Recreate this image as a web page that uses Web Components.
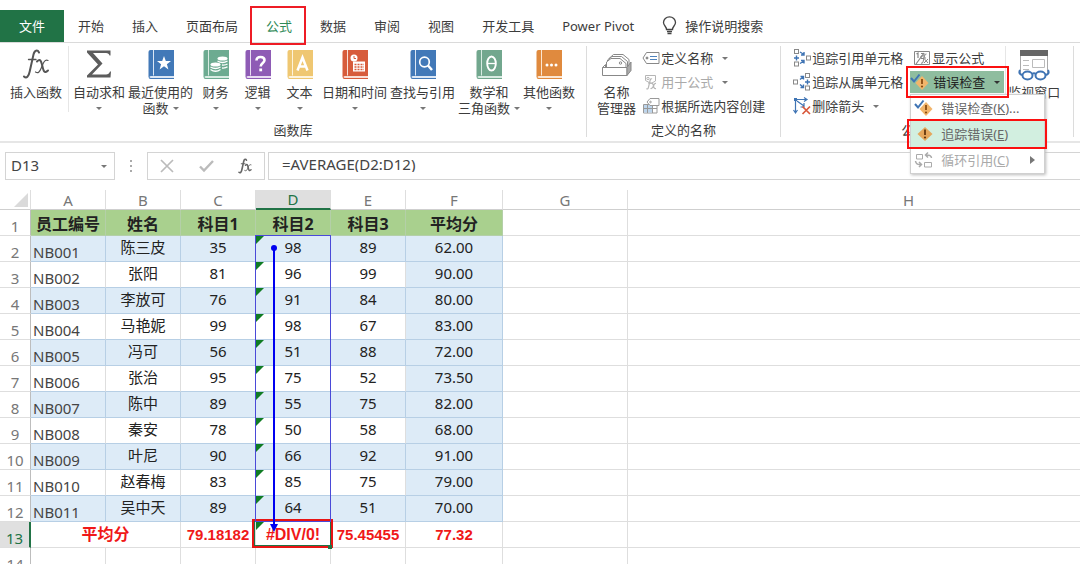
<!DOCTYPE html>
<html lang="zh-CN">
<head>
<meta charset="utf-8">
<title>工作簿 - 公式</title>
<style>
  html, body { margin: 0; height: 100%; overflow: hidden; background: #fff; }
  body { font: 13px/16px "Noto Sans", "Noto Sans CJK SC", sans-serif; color: #3c3c3c; }
</style>
</head>
<body>
<work-book></work-book>
<script>
const book = (color, edge, art) => `<svg width="26" height="30" viewBox="0 0 26 30">
  <path d="M2.500 1H26V30H2.500Q.5 30 .5 27.500V3Q.5 1 2.500 1Z" fill="${color}"/>
  <path d="M3 27H26V29H3Q1.500 29 1.500 28T3 27Z" fill="${edge}"/>
  <path d="M5.500 1V26.500" stroke="${edge}" stroke-width="1"/>${art}</svg>`;
const box = (x, y) => `<rect x="${x}" y="${y}" width="4" height="4" fill="#fff" stroke="#888"/>`;

const ICONS = {
  fx: `<svg width="28" height="30" viewBox="0 0 28 30" fill="none" stroke="#555" stroke-linecap="round">
    <path d="M17 3.500C15.500.5 12.500 1 11.500 5.500L7.700 22.500C6.700 27.500 4.500 30 2 27.500" stroke-width="2"/>
    <path d="M6.500 10.500H14" stroke-width="1.300"/>
    <path d="M15 12.500C18 9.500 19 11.500 20 15.500C21.500 22 22 25 26 21.500" stroke-width="2"/>
    <path d="M26 11.500C22.500 10 21 14.500 19.500 18.500C17.500 23.500 16 24.500 13.500 23" stroke-width="1.200"/></svg>`,
  sigma: `<svg width="26" height="30" viewBox="0 0 26 30"><path d="M1 1.500H24.500V6.500H23.500Q23 4 20 4H7L16.500 14.500L6 25.500H20Q23 25.500 24 22.500H25L24.500 28.500H1V26.500L12 15.500L1 3.500Z" fill="#5c5c5c"/></svg>`,
  recent: book('#4279b8', '#dbe7f5', `<path d="M16 7L17.800 12H23L18.900 15.200L20.400 20.400L16 17.300L11.600 20.400L13.100 15.200L9 12H14.200Z" fill="#fff"/>`),
  finance: book('#6dab91', '#d8ebe2', `<g fill="#fff"><ellipse cx="19.500" cy="9.500" rx="5" ry="2"/><ellipse cx="12.500" cy="15.500" rx="5" ry="2"/></g><g fill="none" stroke="#fff" stroke-width="1.300"><path d="M14.500 12Q19.500 15 24.500 12M19 16Q22.500 16.300 24.500 15M19 19Q22.500 19.300 24.500 17.800M7.500 18Q12.500 21 17.500 18M7.500 20.500Q12.500 24 17.500 20.500"/></g>`),
  logic: book('#8e5bb5', '#e8dcf2', `<path d="M11.500 11.500Q11.500 8 15.500 8T19.500 11.300C19.500 14 15.700 14 15.700 17.500" fill="none" stroke="#fff" stroke-width="2.600"/><rect x="14.300" y="19.500" width="2.800" height="2.800" fill="#fff"/>`),
  text: book('#efc772', '#fdf3dc', `<path d="M10.500 21.500L15.500 8.500L20.500 21.500M12.300 17.500H18.700" fill="none" stroke="#fff" stroke-width="2.500"/>`),
  date: book('#d75c3c', '#f9ded6', `<circle cx="12" cy="9" r="3.500" fill="#fff"/><path d="M12 7V9.500H14" fill="none" stroke="#d75c3c"/><path d="M11 12.500H23V22.500H11Z" fill="#fff"/><path d="M12.500 15.500H22M12.500 18H22M12.500 20.500H22" stroke="#d75c3c" stroke-width="1.600" stroke-dasharray="2 1"/>`),
  lookup: book('#4279b8', '#dbe7f5', `<circle cx="14.500" cy="13" r="4.800" fill="none" stroke="#fff" stroke-width="1.700"/><path d="M18 16.500L22 21" stroke="#fff" stroke-width="2.500"/>`),
  math: book('#72a78e', '#d8ebe2', `<ellipse cx="15.500" cy="14.500" rx="4.300" ry="7" fill="none" stroke="#fff" stroke-width="1.900"/><path d="M11.500 14.500H19.500" stroke="#fff" stroke-width="1.300"/>`),
  more: book('#e08a3e', '#fbe6d2', `<g fill="#fff"><circle cx="11" cy="16" r="1.500"/><circle cx="15.500" cy="16" r="1.500"/><circle cx="20" cy="16" r="1.500"/></g>`),
  names: `<svg width="32" height="30" viewBox="0 0 32 30" fill="#fff" stroke="#888" stroke-linejoin="round"><path d="M8 16V9.500L12.500 5.500H22L28 10.500V16"/><path d="M6.500 17V11L11 7.500H20.500L26.500 12.500V18"/><path d="M5.500 18V13L10 9.500H19L25 14.500V19"/><circle cx="19.500" cy="14" r="1.200"/><path d="M1.500 18.500L4.500 15.500V18.500M1.500 18.500H26V26.500H1.500Z"/><path d="M26 26.500L30 21.500V13L26 18.500Z" fill="#aaa"/></svg>`,
  define: `<svg width="18" height="16" viewBox="0 0 18 16" fill="#fff" stroke="#888"><path d="M4.500 2.500H17V13.500H4.500L1 8Z"/><circle cx="5" cy="8" r="1" fill="#777"/><path d="M8 6.500H15M8 9.500H15" stroke="#4f83bd"/></svg>`,
  use: `<svg width="18" height="16" viewBox="0 0 18 16" fill="none" stroke="#b5b5b5"><path d="M3.500 1.500H13.500V7L9 9.500L3.500 6.500Z"/><circle cx="6" cy="4.500" r="1.200"/><path d="M10 5Q8.500 4 8 7L6.500 13Q6 16 4.500 14.500M6 9H9.500M9.500 9.500Q11 9 11.500 12T14 14.500M14 9.500Q12.500 9 11.500 12T8.500 14.500" stroke-width="1.200"/></svg>`,
  create: `<svg width="18" height="16" viewBox="0 0 18 16" fill="#fff" stroke="#999"><path d="M1.500 6.500H15V15H1.500Z"/><path d="M2 7H11V14.500H2Z" fill="#bdd5ec" stroke="none"/><path d="M1.500 10.500H15M5.500 6.500V15M10.500 6.500V15"/><path d="M8 .5H17V7.500H8L5 4Z"/><circle cx="8.500" cy="4" r=".8"/></svg>`,
  precedents: `<svg width="18" height="18" viewBox="0 0 18 18">${box(1.500, .5)}${box(1.500, 13)}${box(13.500, 7)}<path d="M1 9H6M3.500 6.500V11.500M7 3L11 5.500M11 3V6H8M7 14.500L11 12M8 11.500H11V14.500" fill="none" stroke="#3f74b4" stroke-width="1.400"/></svg>`,
  dependents: `<svg width="18" height="18" viewBox="0 0 18 18">${box(.5, 7)}${box(12.500, .5)}${box(12.500, 13)}<path d="M12 9H17M14.500 6.500V11.500M7 6.500L10 4M7.500 3.500H10.500V6.500M7 11.500L10 14M10.500 11.500V14.500H7.500" fill="none" stroke="#3f74b4" stroke-width="1.400"/></svg>`,
  remove: `<svg width="18" height="18" viewBox="0 0 18 18" fill="none"><path d="M2.500 2.500V15.500M.5 13L2.500 16L4.500 13M2 2.500H13M11 .5L14 2.500L11 4.500M4 4L11 9M11 6V10H7.500" stroke="#3f74b4" stroke-width="1.200"/><rect x="1" y="1" width="3" height="3" fill="#3f74b4"/><path d="M9.500 9.500L17 17M17 9.500L9.500 17" stroke="#d9583b" stroke-width="1.700"/></svg>`,
  show: `<svg width="18" height="16" viewBox="0 0 18 16" fill="none" stroke="#888"><path d="M1.500 1.500H16.500V14.500H1.500Z"/><path d="M3.500 4L5 3V8M11 3L3 14" stroke-width="1.200"/><path d="M8 3.500H11V6H8V8.500H11M13.500 4Q12 3.500 11.500 6L10 12Q9.500 14 8 13M10 8H13M11.500 9L15 13M15 9L11 13"/></svg>`,
  check: `<svg width="20" height="18" viewBox="0 0 20 18"><path d="M12 3L18.500 10L12 17L5.500 10Z" fill="#f2b56b"/><path d="M12 6V11" stroke="#8a4b12" stroke-width="1.800"/><circle cx="12" cy="13.500" r="1.100" fill="#8a4b12"/><path d="M1 5L4 8.500L9.500 1.500" fill="none" stroke="#3f74b4" stroke-width="2"/></svg>`,
  trace: `<svg width="20" height="18" viewBox="0 0 20 18"><path d="M11 2L18.500 9L11 16L3.500 9Z" fill="#e5a75c"/><path d="M11 4.500V10" stroke="#63370f" stroke-width="1.800"/><circle cx="11" cy="12.500" r="1.100" fill="#63370f"/></svg>`,
  loop: `<svg width="20" height="18" viewBox="0 0 20 18" fill="none" stroke="#aaa"><path d="M2.500 3.500H8.500V8H2.500ZM10.500 11.500H17.500V16H10.500Z"/><path d="M17.500 7Q17 3.500 12 4M14 1.500L11.500 4L14 6.500M1.500 10Q2 14 7 13.500M5 11L7.500 13.500L5 16" stroke-width="1.500"/></svg>`,
  watch: `<svg width="32" height="34" viewBox="0 0 32 34" fill="none"><path d="M2.500 3V24M29.500 3V24" stroke="#aaa"/><rect x="2" y="1" width="28" height="6" fill="#666"/><path d="M5 11.500H11M5 16.500H11M5 20.500H11" stroke="#bbb"/><path d="M14.500 10.500H26.500V18.500H14.500Z" stroke="#bbb"/><g stroke="#3f74b4" stroke-width="2"><ellipse cx="9.500" cy="26.500" rx="5" ry="4" fill="#fff"/><ellipse cx="22.500" cy="26.500" rx="5" ry="4" fill="#fff"/><path d="M14 25Q16 23.500 18 25M4.500 26Q0 25 2 21M27.500 26Q32 25 30 21"/></g></svg>`,
  bulb: `<svg width="15" height="19" viewBox="0 0 15 19" fill="none" stroke="#444" stroke-width="1.300"><path d="M4.500 13.500C4.500 10.500 1.500 9.500 1.500 6.500A6 5.700 0 0 1 13.500 6.500C13.500 9.500 10.500 10.500 10.500 13.500Z"/><path d="M5 15.500H10M5.500 17.500H9.500"/></svg>`,
  cancel: `<svg width="14" height="14" viewBox="0 0 14 14" stroke="#bbb" stroke-width="1.700"><path d="M1 1L13 13M13 1L1 13"/></svg>`,
  accept: `<svg width="15" height="14" viewBox="0 0 15 14" fill="none" stroke="#bbb" stroke-width="2.400"><path d="M1 7.500L5 11.500L14 2"/></svg>`,
  fxsmall: `<svg width="14" height="16" viewBox="0 0 28 30" fill="none" stroke="#666" stroke-linecap="round"><path d="M17 3.500C15.500.5 12.500 1 11.500 5.500L7.700 22.500C6.700 27.500 4.500 30 2 27.500" stroke-width="3.200"/><path d="M6.500 10.500H14" stroke-width="2"/><path d="M15 13.500C18 10.500 19 12.500 20 16.500C21.500 23 22 26 26 22.500" stroke-width="3"/><path d="M26 12.500C22.500 11 21 15.500 19.500 19.500C17.500 24.500 16 25.500 13.500 24" stroke-width="2"/></svg>`
};

const define = (name, render) => customElements.define(name, class extends HTMLElement {
  connectedCallback() {
    if (this.shadowRoot) return;
    this.attachShadow({ mode: 'open' }).innerHTML = render(this);
  }
});

define('ui-icon', el => `<style>:host{display:block;flex:none}svg{display:block}</style>${ICONS[el.getAttribute('name')]}`);

define('drop-arrow', () => `<style>:host{display:inline-block;width:0;height:0;border:3px solid transparent;border-top-color:#777;border-bottom:0;vertical-align:middle}</style>`);

define('ribbon-tab', el => `<style>
  :host{display:block}
  button{font:inherit;color:inherit;border:0;background:none;height:32px;padding:0 14px 1px;position:relative;display:flex;align-items:center;gap:8px;white-space:nowrap}
  :host([kind=file]) button{background:#217346;color:#fff;padding:0 19px 1px}
  :host([kind=active]) button{color:#2f8a57}
  :host([kind=active]) button::after{content:"";position:absolute;inset:-4px 0 -3px -2px;border:2px solid #ee1c25}
</style><button role="tab" aria-selected="${el.getAttribute('kind') === 'active'}"><slot></slot></button>`);

define('ribbon-group', el => `<style>
  :host{display:flex;flex-direction:column;box-sizing:border-box;height:91px;border-right:1px solid #dcdcdc}
  .tools{display:flex;flex:1}
  .caption{text-align:center;height:14px;line-height:14px}
</style><div class="tools"><slot></slot></div><div class="caption">${el.getAttribute('caption')}</div>`);

define('big-tool', el => `<style>
  :host{display:block}
  button{font:inherit;color:inherit;border:0;background:none;padding:3px 1px 0;min-width:41px;width:100%;display:flex;flex-direction:column;align-items:center;white-space:nowrap}
  .label{margin-top:5px;height:16px}
  .second{height:16px;display:flex;align-items:center;gap:4px}
  :host([tall]) .label{margin-top:1px}
</style><button><ui-icon name="${el.getAttribute('icon')}"></ui-icon><span class="label"><slot></slot></span>
<span class="second">${el.getAttribute('second') || ''}${el.hasAttribute('drop') ? '<drop-arrow></drop-arrow>' : ''}</span></button>`);

define('small-tool', el => `<style>
  :host{display:block}
  button{font:inherit;color:inherit;border:0;background:none;padding:0;height:24px;display:flex;align-items:center;gap:1px;white-space:nowrap}
  button:disabled{color:#aaa}
  drop-arrow{margin-left:8px}
</style><button ${el.hasAttribute('disabled') ? 'disabled' : ''}><ui-icon name="${el.getAttribute('icon')}"></ui-icon><slot></slot>${el.hasAttribute('drop') ? '<drop-arrow></drop-arrow>' : ''}</button>`);

define('error-menu', () => `<style>
  :host{display:block;position:relative;z-index:5;height:24px}
  button{font:inherit;color:inherit;border:0;background:none;padding:0;display:flex;align-items:center;white-space:nowrap}
  .open{position:relative;z-index:2;background:#8fbd9f;color:#222;width:94px;height:22px;margin:1px 0 0 -3px;gap:3px}
  .open drop-arrow{margin-left:6px;border-top-color:#333}
  .open::after{content:"";position:absolute;inset:-5px -5px -5px -4px;border:2px solid #fb1010}
  .menu{position:absolute;left:-3px;top:24px;width:135px;background:#fff;border:1px solid #d0d0d0;box-sizing:border-box;box-shadow:1px 1px 3px #bbb;color:#666}
  .menu button{position:relative;width:100%;height:26px;padding:0 9px 0 3px;gap:7px}
  .menu .hot{background:#d2efe0}
  .menu .hot::after{content:"";position:absolute;inset:-2px -3px -2px -4px;border:2px solid #fb1010}
  .menu button:disabled{color:#aaa}
  .sub{margin-left:auto;border:4px solid transparent;border-left:5px solid #777;border-right:0}
</style>
<button class="open" aria-haspopup="menu" aria-expanded="true"><ui-icon name="check"></ui-icon>错误检查<drop-arrow></drop-arrow></button>
<div class="menu" role="menu">
  <button role="menuitem"><ui-icon name="check"></ui-icon><span>错误检查(<u>K</u>)...</span></button>
  <button role="menuitem" class="hot"><ui-icon name="trace"></ui-icon><span>追踪错误(<u>E</u>)</span></button>
  <button role="menuitem" disabled><ui-icon name="loop"></ui-icon><span>循环引用(<u>C</u>)</span><i class="sub"></i></button>
</div>`);

define('ribbon-bar', () => `<style>
  :host{display:block}
  .tabs{display:flex;padding-top:10px;border-bottom:1px solid #dadada}
  .groups{display:flex;padding:3px 0 4px;border-bottom:2px solid #e6e6e6}
  .row{display:flex;gap:1px}
  .insert{padding:0 5px 0 9px;border-right:1px solid #e6e6e6;margin-right:3px;height:66px}
  .lib{padding-right:10px}
  .names{padding:0 5px 0 9px}
  .col{display:flex;flex-direction:column}
  .defs{padding-right:15px}
  .audit{padding-left:12px}
  .audit2{margin-left:10px;width:92px}
  .watch{border-left:1px solid #e6e6e6;padding:0 12px 0 1px;height:66px}
</style>
<div class="tabs" role="tablist">
  <ribbon-tab kind="file">文件</ribbon-tab><ribbon-tab>开始</ribbon-tab><ribbon-tab>插入</ribbon-tab><ribbon-tab>页面布局</ribbon-tab><ribbon-tab kind="active">公式</ribbon-tab><ribbon-tab>数据</ribbon-tab><ribbon-tab>审阅</ribbon-tab><ribbon-tab>视图</ribbon-tab><ribbon-tab>开发工具</ribbon-tab><ribbon-tab>Power Pivot</ribbon-tab>
  <ribbon-tab><ui-icon name="bulb"></ui-icon>操作说明搜索</ribbon-tab>
</div>
<div class="groups">
  <ribbon-group caption="函数库">
    <div class="insert"><big-tool icon="fx">插入函数</big-tool></div>
    <div class="row lib">
      <big-tool icon="sigma" drop>自动求和</big-tool>
      <big-tool icon="recent" second="函数" drop>最近使用的</big-tool>
      <big-tool icon="finance" drop>财务</big-tool>
      <big-tool icon="logic" drop>逻辑</big-tool>
      <big-tool icon="text" drop>文本</big-tool>
      <big-tool icon="date" drop>日期和时间</big-tool>
      <big-tool icon="lookup" drop>查找与引用</big-tool>
      <big-tool icon="math" second="三角函数" drop>数学和</big-tool>
      <big-tool icon="more" drop>其他函数</big-tool>
    </div>
  </ribbon-group>
  <ribbon-group caption="定义的名称">
    <div class="names"><big-tool icon="names" second="管理器">名称</big-tool></div>
    <div class="col defs">
      <small-tool icon="define" drop>定义名称</small-tool>
      <small-tool icon="use" disabled drop>用于公式</small-tool>
      <small-tool icon="create">根据所选内容创建</small-tool>
    </div>
  </ribbon-group>
  <ribbon-group caption="公式审核">
    <div class="col audit">
      <small-tool icon="precedents">追踪引用单元格</small-tool>
      <small-tool icon="dependents">追踪从属单元格</small-tool>
      <small-tool icon="remove" drop>删除箭头</small-tool>
    </div>
    <div class="col audit2">
      <small-tool icon="show">显示公式</small-tool>
      <error-menu></error-menu>
    </div>
    <div class="watch"><big-tool icon="watch" tall>监视窗口</big-tool></div>
  </ribbon-group>
</div>`);

define('formula-bar', () => `<style>
  :host{display:flex;padding:9px 0 10px 5px;height:28px;font-size:15px}
  input{font:inherit;color:#444;border:0;background:none;outline:0;padding:0 0 2px;min-width:0;flex:1}
  .box{box-sizing:border-box;border:1px solid #d4d4d4;background:#fff;display:flex;align-items:center}
  .name{width:110px;padding:0 7px 0 5px}
  .dots{width:32px;display:flex;flex-direction:column;align-items:center;justify-content:center;gap:3px}
  .dots i{width:2px;height:2px;background:#aaa}
  .actions{width:118px;justify-content:space-between;padding:0 12px;margin-right:3px}
  button{border:0;background:none;padding:0}
  .formula{flex:1;padding-left:13px;border-right:0}
  .formula input{padding-bottom:5px}
</style>
<label class="box name"><input aria-label="名称框" value="D13"><drop-arrow></drop-arrow></label>
<div class="dots"><i></i><i></i><i></i></div>
<div class="box actions"><button aria-label="取消"><ui-icon name="cancel"></ui-icon></button><button aria-label="输入"><ui-icon name="accept"></ui-icon></button><button aria-label="插入函数"><ui-icon name="fxsmall"></ui-icon></button></div>
<label class="box formula"><input aria-label="编辑栏" value="=AVERAGE(D2:D12)"></label>`);

const PEOPLE = [
  ['NB001', '陈三皮', 35, 98, 89, '62.00'], ['NB002', '张阳', 81, 96, 99, '90.00'],
  ['NB003', '李放可', 76, 91, 84, '80.00'], ['NB004', '马艳妮', 99, 98, 67, '83.00'],
  ['NB005', '冯可', 56, 51, 88, '72.00'], ['NB006', '张治', 95, 75, 52, '73.50'],
  ['NB007', '陈中', 89, 55, 75, '82.00'], ['NB008', '秦安', 78, 50, 58, '68.00'],
  ['NB009', '叶尼', 90, 66, 92, '91.00'], ['NB010', '赵春梅', 83, 85, 75, '79.00'],
  ['NB011', '吴中天', 89, 64, 51, '70.00']
];
const TRACE = `<svg class="trace" viewBox="0 0 76 300"><rect x=".5" y=".5" width="75" height="286" fill="none" stroke="#4a4ad8"/><circle cx="19" cy="13" r="3" fill="#0000f0"/><path d="M19 13V291" stroke="#0000f0" stroke-width="2"/><path d="M15 289H23L19 297Z" fill="#0000f0"/></svg>`;

define('sheet-grid', () => {
  const letters = [...'ABCDEFGH'].map(c => `<th scope="col" class="${c === 'D' ? 'on' : ''}">${c}</th>`).join('');
  const body = PEOPLE.map((p, i) => `<tr class="data ${i % 2 ? '' : 'band'}"><th scope="row">${i + 2}</th>` +
    p.map((v, c) => `<td class="c${c}">${c === 3 ? '<i class="flag"></i>' + (i ? '' : TRACE) : ''}${v}</td>`).join('') + '<td></td><td></td></tr>').join('');
  return `<style>
  :host{display:block;overflow:hidden;font-size:15px;line-height:20px}
  table{border-collapse:separate;border-spacing:0;table-layout:fixed;width:1190px}
  th,td{box-sizing:border-box;padding:0;height:26px;border-right:1px solid #dedede;border-bottom:1px solid #dedede;text-align:center;position:relative;white-space:nowrap;color:#222}
  th{font-weight:400;color:#777}
  thead th{height:20px;line-height:18px;border-bottom-color:#cfcfcf}
  thead th.on{background:#dfdfdf;color:#217346;border-bottom:2px solid #217346}
  .corner::after{content:"";position:absolute;right:2px;bottom:2px;border:7px solid;border-color:transparent #dadada #dadada transparent}
  tbody th{vertical-align:bottom;line-height:18px;border-right-color:#bdbdbd}
  .head td{font-size:16px;font-weight:700;padding-top:2px}
  .head td:not(:nth-last-child(-n+2)){background:#a9d08e;border-color:#b4cfa8}
  .data td{padding-bottom:3px}
  .data .c0,.data .c1,.data .c2,.data .c3,.data .c4,.data .c5{border-color:#b7cfe5}
  .data:not(.band) .c0,.data:not(.band) .c1,.data:not(.band) .c2,.data:not(.band) .c4{border-right-color:#dedede}
  .band .c0,.band .c1,.band .c2,.band .c3,.band .c4,.data .c5{background:#ddebf7}
  .data .c0{text-align:left;vertical-align:bottom;line-height:18px;padding:0 0 0 2px;color:#444}
  .flag{position:absolute;left:0;top:0;border:4px solid;border-color:#107c24 transparent transparent #107c24}
  .trace{position:absolute;left:-1px;top:-1px;width:76px;height:300px;z-index:3}
  .total td{color:#f01818;font-family:"Liberation Sans","Noto Sans CJK SC",sans-serif;font-weight:700}
  .total .label,.total .active{font-size:16px}
  .total th{background:#e0e0e0;color:#217346;border-right:2px solid #217346}
  .active::after{content:"";position:absolute;inset:-3px -3px -1px -4px;border:2px solid #e81414;box-shadow:inset 0 0 0 1px #217346;z-index:2}
  .active::before{content:"";position:absolute;right:-2px;bottom:-2px;width:4px;height:4px;background:#217346;z-index:4}
  </style>
  <table><colgroup><col style="width:31px"><col style="width:75px"><col style="width:75px"><col style="width:75px"><col style="width:75px"><col style="width:75px"><col style="width:97px"><col style="width:125px"><col></colgroup>
  <thead><tr><th class="corner" aria-label="全选"></th>${letters}</tr></thead>
  <tbody>
  <tr class="head"><th scope="row">1</th><td>员工编号</td><td>姓名</td><td>科目1</td><td>科目2</td><td>科目3</td><td>平均分</td><td></td><td></td></tr>
  ${body}
  <tr class="total"><th scope="row">13</th><td colspan="2" class="label">平均分</td><td>79.18182</td><td class="active"><i class="flag"></i>#DIV/0!</td><td>75.45455</td><td>77.32</td><td></td><td></td></tr>
  <tr><th scope="row">14</th>${'<td></td>'.repeat(8)}</tr>
  </tbody></table>`;
});

define('work-book', () => `<style>:host{display:flex;flex-direction:column;height:100vh;overflow:hidden}ribbon-bar,formula-bar{flex:none}sheet-grid{flex:1}</style>
<ribbon-bar></ribbon-bar><formula-bar></formula-bar><sheet-grid></sheet-grid>`);
</script>
</body>
</html>
